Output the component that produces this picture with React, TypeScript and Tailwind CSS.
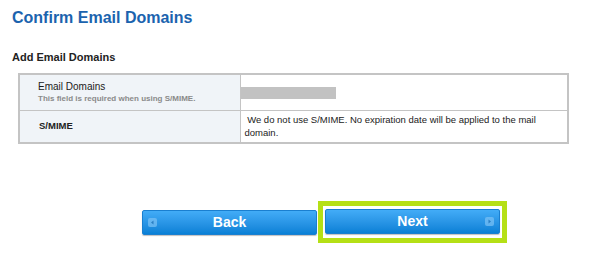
function Arrow({ dir }: { dir: 'left' | 'right' }) {
  return (
    <span className="flex h-[9px] w-[9px] items-center justify-center rounded-[2px] bg-[#7cc2f5]/70">
      <svg width="5" height="5" viewBox="0 0 5 5">
        {dir === 'left' ? (
          <polygon points="3.5,0.5 3.5,4.5 1,2.5" fill="#2a7fc4" />
        ) : (
          <polygon points="1.5,0.5 1.5,4.5 4,2.5" fill="#2a7fc4" />
        )}
      </svg>
    </span>
  );
}

function BlueButton({ label, dir }: { label: string; dir: 'left' | 'right' }) {
  return (
    <button
      type="button"
      className="relative flex h-[25px] w-[175px] items-center justify-center rounded-[2px] border border-[#1a7fd0] bg-gradient-to-b from-[#42acf7] to-[#0780d6] text-[14px] font-bold text-white shadow-[0_1px_1px_rgba(0,0,0,0.25)]"
    >
      <span className={dir === 'left' ? 'absolute left-[5px] top-[7px]' : 'absolute right-[5px] top-[7px]'}>
        <Arrow dir={dir} />
      </span>
      {label}
    </button>
  );
}

export default function App() {
  return (
    <div className="h-[256px] w-[604px] bg-white font-['Liberation_Sans',Arial,sans-serif]">
      <h1 className="pl-[12px] pt-[8px] text-[16px] font-bold leading-[20px] text-[#1b63ae]">
        Confirm Email Domains
      </h1>

      <h2 className="mt-[23px] pl-[12px] text-[11px] font-bold leading-[13px] text-[#222]">
        Add Email Domains
      </h2>

      <table className="ml-[18px] mt-[9px] w-[551px] border-collapse border-[2px] border-[#c4c4c4] text-[9.5px]">
        <tbody>
          <tr className="h-[36px]">
            <td className="w-[221px] border border-[#c4c4c4] bg-[#f0f4f8] pl-[18px] align-middle">
              <div className="text-[10px] leading-[12px] text-[#1a1a1a]">Email Domains</div>
              <div className="mt-[1px] text-[8px] font-bold leading-[10px] text-[#8a8a8a]">
                This field is required when using S/MIME.
              </div>
            </td>
            <td className="border border-[#c4c4c4] pl-0 align-middle">
              <div className="mt-[2px] h-[12px] w-[95px] bg-[#c2c2c2]" />
            </td>
          </tr>
          <tr className="h-[33px]">
            <td className="border border-[#c4c4c4] bg-[#f0f4f8] pl-[19px] align-middle font-bold text-[#222]">
              S/MIME
            </td>
            <td className="border border-[#c4c4c4] pl-[4px] pr-[20px] align-middle leading-[13px] text-[#222]">
              {'\u00a0'}We do not use S/MIME. No expiration date will be applied to the mail domain.
            </td>
          </tr>
        </tbody>
      </table>

      <div className="mt-[57px] flex items-center pl-[142px]">
        <BlueButton label="Back" dir="left" />
        <div className="ml-[1px] border-[5px] border-[#b5e016] px-[2px] pb-[4px] pt-[3px]">
          <BlueButton label="Next" dir="right" />
        </div>
      </div>
    </div>
  );
}
